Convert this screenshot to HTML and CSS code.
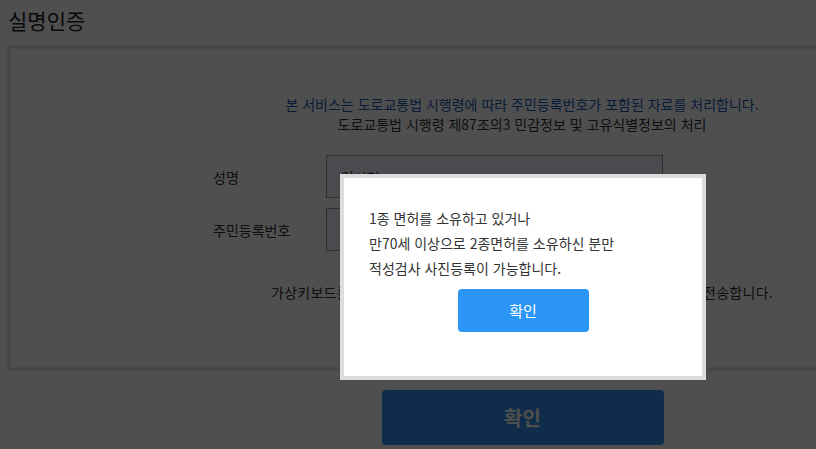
FILE: index.html
```html
<!DOCTYPE html>
<html lang="ko">
<head>
    <meta charset="UTF-8">
    <meta name="viewport" content="width=device-width, initial-scale=1.0">
    <title>실명인증</title>
    <link rel="stylesheet" href="styles.css">
</head>
<body>
    <div class="page">
        <h1>실명인증</h1>

        <div class="auth-box">
            <p class="notice">
                <span class="notice-blue">본 서비스는 도로교통법 시행령에 따라 주민등록번호가 포함된 자료를 처리합니다.</span><br>
                도로교통법 시행령 제87조의3 민감정보 및 고유식별정보의 처리
            </p>

            <form class="auth-form">
                <div class="form-row">
                    <label for="name">성명</label>
                    <input type="text" id="name" value="이시현">
                </div>
                <div class="form-row">
                    <label for="rrn">주민등록번호</label>
                    <input type="password" id="rrn">
                </div>
            </form>

            <p class="hint">가상키보드를 사용하시면 입력하신 주민등록번호를 암호화하여 안전하게 전송합니다.</p>
        </div>

        <div class="btn-area">
            <button type="button" class="btn-main">확인</button>
        </div>
    </div>

    <div class="dim"></div>
    <div class="alert">
        <p>1종 면허를 소유하고 있거나<br>
        만70세 이상으로 2종면허를 소유하신 분만<br>
        적성검사 사진등록이 가능합니다.</p>
        <button type="button" class="btn-alert">확인</button>
    </div>
</body>
</html>
```

FILE: styles.css
```css
html, body {
    margin: 0;
    padding: 0;
    overflow: hidden;
    background: #fff;
}
body {
    font-family: "Noto Sans CJK KR", "Noto Sans", sans-serif;
    font-size: 14px;
    color: #333;
}
h1 {
    margin: 0;
    padding: 8px 8px 0;
    font-size: 21px;
    font-weight: normal;
    line-height: 24px;
    color: #222;
}
.auth-box {
    margin: 13px 0 0 7px;
    height: 318px;
    border: 4px solid #e8e8e8;
    border-right: none;
}
.notice {
    margin: 45px 0 0;
    padding-left: 217px;
    line-height: 20px;
    text-align: center;
}
.notice-blue { color: #1a5bb5; }
.auth-form {
    margin-top: 21px;
    padding-left: 202px;
    display: flex;
    flex-direction: column;
    gap: 10px;
}
.form-row {
    display: flex;
    align-items: center;
}
.form-row label {
    width: 113px;
}
.form-row input {
    box-sizing: border-box;
    width: 337px;
    height: 43px;
    border: 1px solid #999;
    background: #eef0fa;
    padding: 0 14px;
    font-family: inherit;
    font-size: 14px;
    color: #333;
}
.hint {
    margin: 31px 0 0;
    padding-left: 217px;
    line-height: 20px;
    text-align: center;
    white-space: nowrap;
    letter-spacing: 0.25px;
}
.btn-area {
    padding: 19px 0 0 229px;
    text-align: center;
}
.btn-main {
    width: 282px;
    height: 55px;
    border: none;
    border-radius: 4px;
    background: #3091ef;
    color: #fff;
    font-family: inherit;
    font-size: 20px;
    font-weight: bold;
}
.dim {
    position: fixed;
    inset: 0;
    background: rgba(0, 0, 0, 0.69);
}
.alert {
    position: absolute;
    left: 340px;
    top: 174px;
    box-sizing: border-box;
    width: 366px;
    height: 206px;
    border: 4px solid #ddd;
    background: #fff;
    padding: 28px 25px 0;
    text-align: center;
}
.alert p {
    margin: 0;
    line-height: 25px;
    text-align: left;
    color: #333;
}
.btn-alert {
    margin-top: 8px;
    width: 131px;
    height: 43px;
    border: none;
    border-radius: 4px;
    background: #2b96f5;
    color: #fff;
    font-family: inherit;
    font-size: 15px;
}
```
